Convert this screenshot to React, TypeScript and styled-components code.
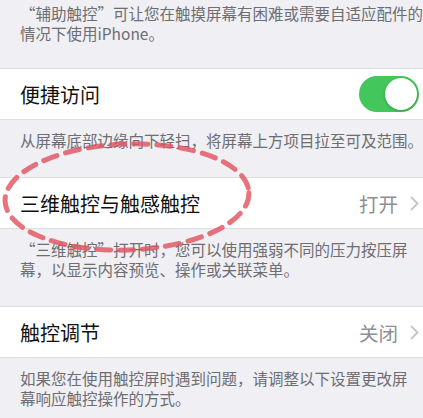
import React from 'react';
import styled, { createGlobalStyle } from 'styled-components';

const GlobalStyle = createGlobalStyle`
    html, body {
        margin: 0;
        padding: 0;
        background: #efeff4;
    }
    body {
        font-family: "Noto Sans CJK SC", "Noto Sans", sans-serif;
        -webkit-font-smoothing: antialiased;
    }
`

type Item = {
    title: string;
    value?: string;
    toggle?: boolean;
    note: string[];
}

const items: Item[] = [
    {
        title: '便捷访问',
        toggle: true,
        note: ['从屏幕底部边缘向下轻扫，将屏幕上方项目拉至可及范围。'],
    },
    {
        title: '三维触控与触感触控',
        value: '打开',
        note: ['“三维触控”打开时，您可以使用强弱不同的压力按压屏', '幕，以显示内容预览、操作或关联菜单。'],
    },
    {
        title: '触控调节',
        value: '关闭',
        note: ['如果您在使用触控屏时遇到问题，请调整以下设置更改屏', '幕响应触控操作的方式。'],
    },
]

const App = (): JSX.Element => {
    return (
        <>
            <GlobalStyle />
            <Page>
                <Note top={3} bottom={25}>
                    “辅助触控”可让您在触摸屏幕有困难或需要自适应配件的<br />
                    情况下使用iPhone。
                </Note>
                {items.map((item) => (
                    <Group key={item.title}>
                        <Row>
                            <Title>{item.title}</Title>
                            {item.toggle ? (
                                <Toggle>
                                    <Knob />
                                </Toggle>
                            ) : (
                                <Detail>
                                    <Value>{item.value}</Value>
                                    <svg width="9" height="15" viewBox="0 0 9 15">
                                        <polyline points="1.5,1.5 7.5,7.5 1.5,13.5" fill="none" stroke="#c7c7cc" strokeWidth="2" strokeLinecap="round" strokeLinejoin="round" />
                                    </svg>
                                </Detail>
                            )}
                        </Row>
                        <Note top={10} bottom={27}>
                            {item.note.map((line, i) => (
                                <React.Fragment key={i}>
                                    {i > 0 && <br />}
                                    {line}
                                </React.Fragment>
                            ))}
                        </Note>
                    </Group>
                ))}
                <Mark width="423" height="418" viewBox="0 0 423 418">
                    <ellipse cx="127" cy="197" rx="122" ry="53" fill="none" stroke="rgba(226,84,96,0.82)" strokeWidth="5" strokeDasharray="14 9" strokeLinecap="round" transform="rotate(-2 127 197)" />
                </Mark>
            </Page>
        </>
    );
};

const Page = styled.div`
    position: relative;
    width: 423px;
    height: 418px;
    overflow: hidden;
    background: #efeff4;
`

const Group = styled.div`
    display: flex;
    flex-direction: column;
`

const Note = styled.p<{ top: number; bottom: number }>`
    margin: 0;
    padding: ${(p) => p.top}px 10px ${(p) => p.bottom}px 20px;
    font-size: 15.5px;
    line-height: 20px;
    color: #6d6d72;
    white-space: nowrap;
`

const Row = styled.div`
    height: 50px;
    display: flex;
    align-items: center;
    justify-content: space-between;
    padding: 0 4px 0 20px;
    background: #ffffff;
    border-top: 1px solid #dedee2;
    border-bottom: 1px solid #dedee2;
`

const Title = styled.span`
    font-size: 20px;
    color: #111111;
`

const Detail = styled.div`
    display: flex;
    align-items: center;
    gap: 12px;
`

const Value = styled.span`
    font-size: 19.5px;
    color: #8e8e93;
`

const Toggle = styled.div`
    width: 60px;
    height: 36px;
    border-radius: 18px;
    background: #43c65c;
    display: flex;
    align-items: center;
    justify-content: flex-end;
    padding: 2px;
    box-sizing: border-box;
`

const Knob = styled.div`
    width: 32px;
    height: 32px;
    border-radius: 50%;
    background: #ffffff;
    box-shadow: 0 1px 3px rgba(0, 0, 0, 0.25);
`

const Mark = styled.svg`
    position: absolute;
    left: 0;
    top: 0;
    pointer-events: none;
`

export default App;
